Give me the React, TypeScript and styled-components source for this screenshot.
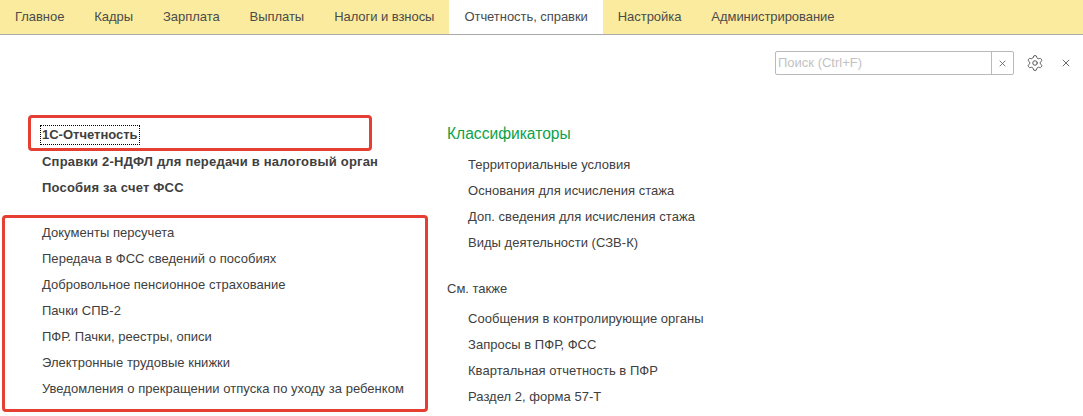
import React from "react";
import styled, { createGlobalStyle } from "styled-components";
import { Settings } from "lucide-react";

const Global = createGlobalStyle`
  html, body { margin: 0; padding: 0; background: #fff; }
  body { font-family: "Liberation Sans", Arial, sans-serif; font-size: 13px; color: #333; }
`;
const Page = styled.div`
  position: relative; width: 1083px; height: 416px; overflow: hidden; background: #fff;
`;
const TabBar = styled.nav`
  display: flex; height: 34px; background: #fbeb9e; border-bottom: 1px solid #a9a9a9;
`;
const Tab = styled.div<{ $active?: boolean }>`
  padding: 0 15px; line-height: 34px; font-size: 13px; letter-spacing: -0.05px; color: #4b4b4b;
  background: ${(p) => (p.$active ? "#fff" : "transparent")};
  height: 34px;
  white-space: nowrap;
`;
const TopRow = styled.div`
  display: flex; justify-content: flex-end; align-items: center; height: 24px; margin-top: 16px; padding-right: 7px;
`;
const Search = styled.div`
  display: flex; box-sizing: border-box; width: 239px; height: 24px; border: 1px solid #b9b9b9; border-radius: 2px;
`;
const SearchText = styled.div`
  flex: 1; padding-left: 2px; line-height: 22px; font-size: 13px; color: #c2c2c2;
`;
const SearchClear = styled.div`
  width: 21px; border-left: 1px solid #b9b9b9; display: flex; align-items: center; justify-content: center;
`;
const IconSlot = styled.div<{ $w: number }>`
  width: ${(p) => p.$w}px; display: flex; justify-content: center; align-items: center;
`;
const Columns = styled.div`
  display: flex; padding-top: 47px;
`;
const LeftCol = styled.div`
  width: 405px; padding-left: 42px; flex: none;
`;
const RightCol = styled.div`
  flex: 1;
`;
const Row = styled.div<{ $bold?: boolean }>`
  height: 26px; line-height: 26px; font-size: 13px; color: #404040;
  letter-spacing: ${(p) => (p.$bold ? "0.2px" : "0.03px")};
  font-weight: ${(p) => (p.$bold ? 700 : 400)}; white-space: nowrap;
`;
const FocusRow = styled(Row)`
  height: 27px; letter-spacing: 0;
`;
const Focus = styled.span`
  outline: 1px dotted #000; padding: 0 1px; margin-left: -1px; display: inline-block; line-height: 18px;
`;
const Group = styled.div`
  margin-top: 19px;
`;
const Heading = styled.div`
  height: 30px; line-height: 24px; font-size: 15.6px; color: #0ba24a;
`;
const Sub = styled.div`
  padding-left: 21px;
`;
const SeeAlso = styled.div`
  height: 30px; line-height: 26px; margin-top: 20px; font-size: 13px; color: #404040;
`;
const RedBox = styled.div<{ $x: number; $y: number; $w: number; $h: number }>`
  position: absolute; left: ${(p) => p.$x}px; top: ${(p) => p.$y}px; width: ${(p) => p.$w}px; height: ${(p) => p.$h}px;
  box-sizing: border-box; border: 3px solid #e53f33; border-radius: 4px; pointer-events: none;
`;

const tabs = ["Главное","Кадры","Зарплата","Выплаты","Налоги и взносы","Отчетность, справки","Настройка","Администрирование"];
const docs = ["Документы персучета","Передача в ФСС сведений о пособиях","Добровольное пенсионное страхование","Пачки СПВ-2","ПФР. Пачки, реестры, описи","Электронные трудовые книжки","Уведомления о прекращении отпуска по уходу за ребенком"];
const classif = ["Территориальные условия","Основания для исчисления стажа","Доп. сведения для исчисления стажа","Виды деятельности (СЗВ-К)"];
const also = ["Сообщения в контролирующие органы","Запросы в ПФР, ФСС","Квартальная отчетность в ПФР","Раздел 2, форма 57-Т"];

const Cross = ({ s }: { s: number }) => (
  <svg width={s} height={s} viewBox="0 0 10 10" stroke="#555" strokeWidth="1.1" fill="none">
    <path d="M1 1 9 9M9 1 1 9" />
  </svg>
);

export default function App() {
  return (
    <Page>
      <Global />
      <TabBar>
        {tabs.map((t) => <Tab key={t} $active={t === "Отчетность, справки"}>{t}</Tab>)}
      </TabBar>
      <TopRow>
        <Search>
          <SearchText>Поиск (Ctrl+F)</SearchText>
          <SearchClear><Cross s={7} /></SearchClear>
        </Search>
        <IconSlot $w={42}><Settings size={18} strokeWidth={1.3} color="#555" /></IconSlot>
        <IconSlot $w={20}><Cross s={8} /></IconSlot>
      </TopRow>
      <Columns>
        <LeftCol>
          <FocusRow $bold><Focus>1С-Отчетность</Focus></FocusRow>
          <Row $bold>Справки 2-НДФЛ для передачи в налоговый орган</Row>
          <Row $bold>Пособия за счет ФСС</Row>
          <Group>
            {docs.map((d) => <Row key={d}>{d}</Row>)}
          </Group>
        </LeftCol>
        <RightCol>
          <Heading>Классификаторы</Heading>
          <Sub>{classif.map((d) => <Row key={d}>{d}</Row>)}</Sub>
          <SeeAlso>См. также</SeeAlso>
          <Sub>{also.map((d) => <Row key={d}>{d}</Row>)}</Sub>
        </RightCol>
      </Columns>
      <RedBox $x={28} $y={115} $w={344} $h={36} />
      <RedBox $x={2} $y={215} $w={426} $h={197} />
    </Page>
  );
}
